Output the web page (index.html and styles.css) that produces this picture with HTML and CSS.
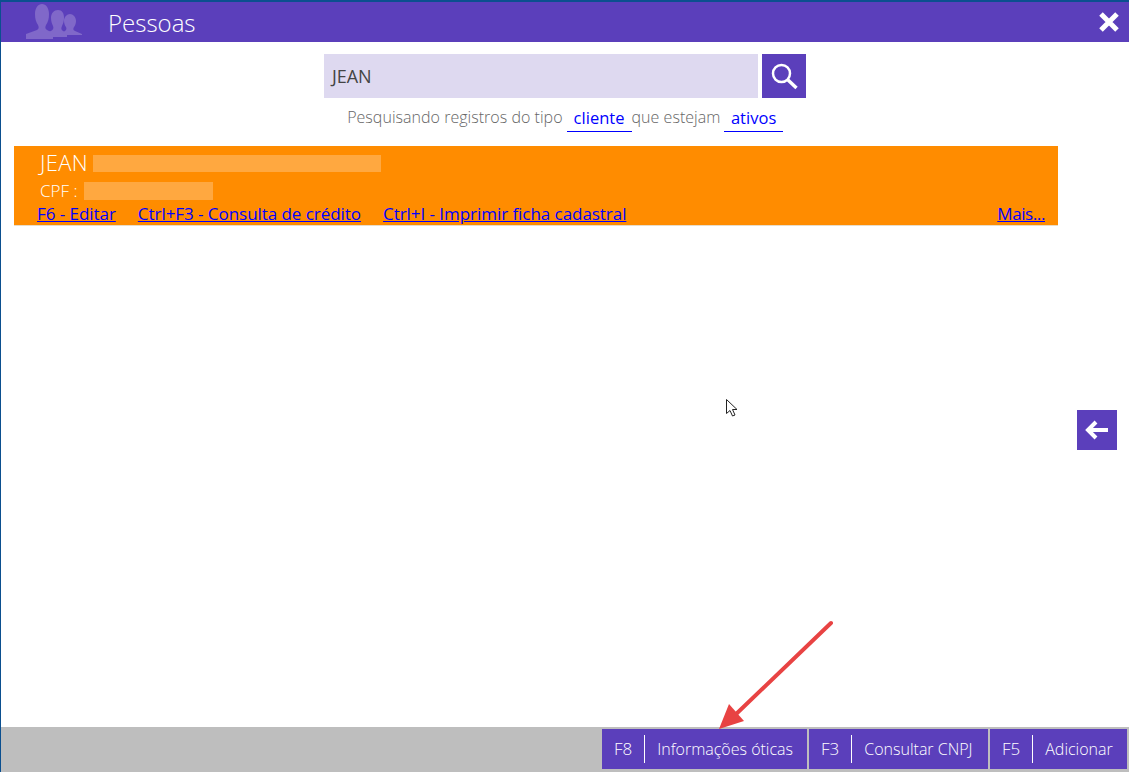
FILE: index.html
```html
<!DOCTYPE html>
<html lang="pt-BR">
<head>
  <meta charset="UTF-8">
  <title>Pessoas</title>
  <link rel="stylesheet" href="styles.css">
</head>
<body>
  <div class="window">
    <header class="title-bar">
      <svg class="people-icon" width="58" height="40" viewBox="26 2 58 40">
        <path d="M26 39v-5l11-4c2-1 2-3 1-5-2-3-3-6-3-11 0-6 3-10 7-10s7 4 7 10c0 5-1 8-3 11-1 2-1 4 1 5l6 3v6z"/>
        <path d="M48 37v-5l3-1c2-1 3-3 2-5-1-2-2-5-2-8 0-5 3-8 7-8s6 3 6 8c0 3-1 6-2 8-1 2-1 4 1 5l4 2v4z"/>
        <path d="M62 35v-2l3-2c1-1 2-2 1-4-1-1-2-4-2-6 0-4 3-7 6-7s6 3 6 7c0 2-1 5-2 6-1 2-1 3 1 4l7 3v1z"/>
      </svg>
      <h1 class="title">Pessoas</h1>
      <svg class="close-icon" width="24" height="24" viewBox="0 0 24 24">
        <path d="M4 4l16 16M20 4L4 20"/>
      </svg>
    </header>

    <div class="search-row">
      <div class="search-input">JEAN</div>
      <button class="search-btn" type="button">
        <svg width="30" height="30" viewBox="0 0 30 30">
          <circle cx="12.5" cy="12.5" r="8.5"/>
          <path d="M19 19l8.500 8"/>
        </svg>
      </button>
    </div>

    <p class="search-info">
      <span>Pesquisando registros do tipo</span>
      <a class="filter filter-type">cliente</a>
      <span>que estejam</span>
      <a class="filter filter-status">ativos</a>
    </p>

    <div class="result">
      <div class="result-name">JEAN <span class="blur blur-name"></span></div>
      <div class="result-doc">CPF : <span class="blur blur-doc"></span></div>
      <div class="result-links">
        <a class="link">F6 - Editar</a>
        <a class="link">Ctrl+F3 - Consulta de crédito</a>
        <a class="link">Ctrl+I - Imprimir ficha cadastral</a>
        <a class="link link-more">Mais...</a>
      </div>
    </div>

    <button class="back-btn" type="button">
      <svg width="24" height="20" viewBox="0 0 24 20">
        <path d="M23 10H4M11 2l-8 8 8 8"/>
      </svg>
    </button>

    <svg class="cursor" width="14" height="20" viewBox="0 0 14 20">
      <path d="M1.500 1.500v14l3.500-3 2.500 5.500 2.500-1-2.500-5.500h4.500z"/>
    </svg>

    <svg class="annotation" width="120" height="112" viewBox="0 0 120 112">
      <path class="annotation-line" d="M112 3L14 97"/>
      <path class="annotation-head" d="M0 109l10-25 15 17z"/>
    </svg>

    <footer class="action-bar">
      <button class="action action-optics" type="button"><span class="key">F8</span><span class="label">Informações óticas</span></button>
      <button class="action action-cnpj" type="button"><span class="key">F3</span><span class="label">Consultar CNPJ</span></button>
      <button class="action action-add" type="button"><span class="key">F5</span><span class="label">Adicionar</span></button>
    </footer>
  </div>
</body>
</html>
```

FILE: styles.css
```css
* {
  box-sizing: border-box;
}

html,
body {
  margin: 0;
  padding: 0;
  height: 100%;
  overflow: hidden;
}

body {
  font-family: "Open Sans", "Noto Sans", sans-serif;
  background-color: #fff;
}

.window {
  position: relative;
  display: flex;
  flex-direction: column;
  height: 772px;
  border-top: 2px solid #0b4f8f;
  border-left: 1px solid #0b4f8f;
}

.title-bar {
  display: flex;
  align-items: center;
  flex: 0 0 40px;
  padding: 0 8px 0 25px;
  background-color: #5b3fbb;
}

.people-icon {
  fill: #8068c9;
}

.title {
  flex: 1;
  margin: 0 0 0 24px;
  font-size: 24px;
  font-weight: 300;
  color: #fff;
}

.close-icon {
  stroke: #fff;
  stroke-width: 5px;
  fill: none;
}

.search-row {
  display: flex;
  justify-content: center;
  gap: 4px;
  margin: 12px 0 0 -1px;
  padding-left: 1px;
}

.search-input {
  display: flex;
  align-items: center;
  width: 434px;
  height: 44px;
  padding-left: 8px;
  font-size: 18px;
  letter-spacing: -0.1px;
  color: #444;
  background-color: #ded9f0;
}

.search-btn {
  display: flex;
  align-items: center;
  justify-content: center;
  width: 44px;
  height: 44px;
  padding: 0;
  border: none;
  background-color: #5b3fbb;
}

.search-btn svg {
  fill: none;
  stroke: #fff;
  stroke-width: 2.5px;
}

.search-btn svg path {
  stroke-width: 3.5px;
}

.search-info {
  display: flex;
  justify-content: center;
  gap: 4px;
  height: 28px;
  margin: 6px 0 0;
  padding: 2px 0 0;
  font-size: 16px;
  font-weight: 300;
  letter-spacing: 0.03px;
  color: #666;
}

.filter {
  height: 26px;
  margin-right: -4px;
  padding: 0 7px;
  font-size: 16.5px;
  font-weight: 400;
  color: #00f;
  border-bottom: 1px solid #00f;
}

.filter-status {
  margin-right: 0;
  padding: 0 6.5px;
}

.result {
  display: flex;
  flex-direction: column;
  width: 1044px;
  height: 80px;
  margin: 14px 0 0 13px;
  background-color: #ff8c00;
  border-bottom: 1px solid #e8dcc8;
  color: #fff;
}

.result-name {
  display: flex;
  align-items: center;
  gap: 5px;
  height: 30px;
  padding: 2px 0 0 26px;
  font-size: 22px;
  font-weight: 300;
  letter-spacing: 0.3px;
}

.result-doc {
  display: flex;
  align-items: center;
  gap: 6px;
  height: 27px;
  padding: 2px 0 0 26px;
  font-size: 17px;
  font-weight: 300;
}

.blur {
  display: block;
  background-color: #ffa840;
}

.blur-name {
  width: 288px;
  height: 17px;
  margin-top: 2px;
}

.blur-doc {
  width: 129px;
  height: 18px;
  margin-top: 1px;
}

.result-links {
  display: flex;
  gap: 22px;
  height: 22px;
  padding: 0 13px 0 23px;
  font-size: 17px;
  line-height: 22px;
  letter-spacing: -0.05px;
}

.link {
  color: #00f;
  text-decoration: underline;
}

.link-more {
  margin-left: auto;
  letter-spacing: -0.4px;
}

.back-btn {
  position: absolute;
  top: 408px;
  left: 1076px;
  display: flex;
  align-items: center;
  justify-content: center;
  width: 40px;
  height: 40px;
  padding: 0;
  border: none;
  background-color: #5b3fbb;
}

.back-btn svg {
  fill: none;
  stroke: #fff;
  stroke-width: 4px;
}

.cursor {
  position: absolute;
  top: 396px;
  left: 724px;
  fill: #fff;
  stroke: #222;
  stroke-width: 1px;
}

.annotation {
  position: absolute;
  top: 618px;
  left: 718px;
  z-index: 1;
}

.annotation-line {
  fill: none;
  stroke: #e84343;
  stroke-width: 4px;
  stroke-linecap: round;
}

.annotation-head {
  fill: #e84343;
}

.action-bar {
  position: absolute;
  left: 0;
  right: 0;
  bottom: 0;
  display: flex;
  justify-content: flex-end;
  gap: 2px;
  height: 45px;
  padding: 2px 2px 3px 0;
  background-color: #bebebe;
}

.action {
  display: flex;
  align-items: center;
  height: 40px;
  padding: 0 12px;
  border: none;
  font-family: inherit;
  font-size: 16px;
  font-weight: 300;
  color: #fff;
  background-color: #5b3fbb;
}

.action-optics {
  width: 205px;
}

.action-cnpj {
  width: 179px;
}

.action-add {
  width: 137px;
}

.key {
  height: 28px;
  padding-right: 12px;
  font-size: 17px;
  line-height: 28px;
  border-right: 1px solid #fff;
}

.label {
  padding-left: 12px;
  white-space: nowrap;
}
```
